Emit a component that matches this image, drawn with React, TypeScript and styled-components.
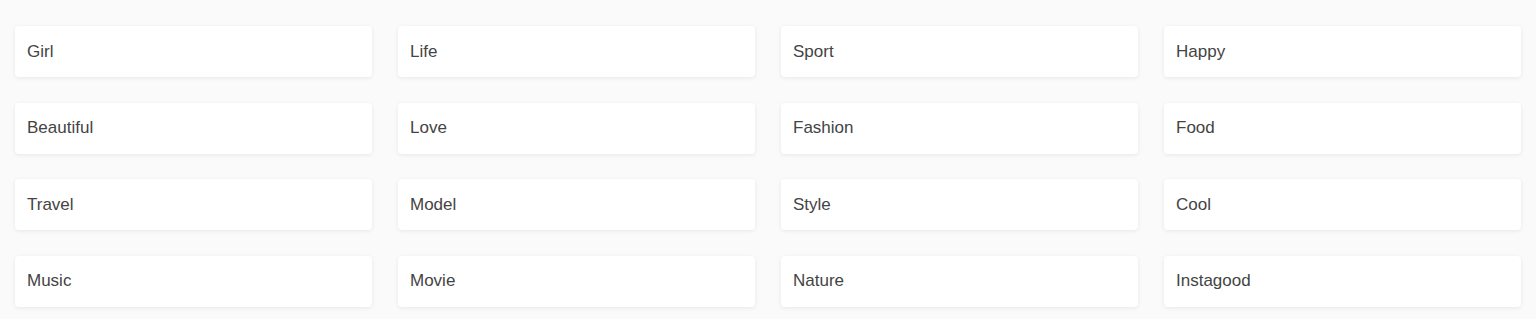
import React from 'react';
import styled, { createGlobalStyle } from 'styled-components';

const GlobalStyle = createGlobalStyle`
    html, body {
        margin: 0;
        padding: 0;
        background: #fafafa;
        font-family: "Liberation Sans", Arial, sans-serif;
    }
`;

const TagGrid = styled.div`
    display: grid;
    grid-template-columns: repeat(4, 1fr);
    column-gap: 26px;
    row-gap: 25.5px;
    padding: 26px 15px;
`;

const TagCard = styled.div`
    height: 51px;
    display: flex;
    align-items: center;
    padding: 0 12px;
    background: #fff;
    border-radius: 4px;
    box-shadow: 0 1px 4px rgba(0, 0, 0, 0.08);
    font-size: 17px;
    color: #444;
    cursor: pointer;
`;

const tags = [
    'Girl', 'Life', 'Sport', 'Happy',
    'Beautiful', 'Love', 'Fashion', 'Food',
    'Travel', 'Model', 'Style', 'Cool',
    'Music', 'Movie', 'Nature', 'Instagood',
];

const App: React.FC = () => {
    return (
        <>
            <GlobalStyle />
            <TagGrid>
                {tags.map((tag) => (
                    <TagCard key={tag}>{tag}</TagCard>
                ))}
            </TagGrid>
        </>
    );
};

export default App;
